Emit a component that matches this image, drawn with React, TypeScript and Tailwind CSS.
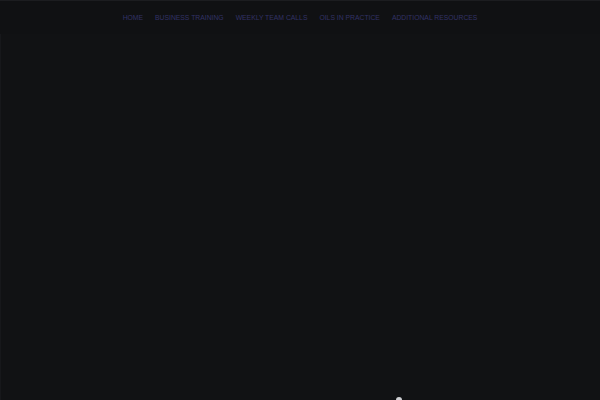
const LINKS = ['HOME', 'BUSINESS TRAINING', 'WEEKLY TEAM CALLS', 'OILS IN PRACTICE', 'ADDITIONAL RESOURCES'];

export default function App() {
  return (
    <div className="relative flex h-[400px] w-[600px] flex-col overflow-hidden bg-[#111214] font-['Liberation_Sans',sans-serif]">
      <div className="h-px w-full bg-[#1c1d20]" />
      <nav className="flex h-[33px] items-center justify-center gap-[12px] bg-[#101113] pt-[2px]">
        {LINKS.map((l) => (
          <a key={l} className="text-[6.8px] text-[#323266]">
            {l}
          </a>
        ))}
      </nav>
      <div className="flex-1 border-l border-[#17181b]" />
      <div className="absolute bottom-0 left-[396px] h-[3px] w-[6px] rounded-t-full bg-[#cfd0d4]" />
    </div>
  );
}
